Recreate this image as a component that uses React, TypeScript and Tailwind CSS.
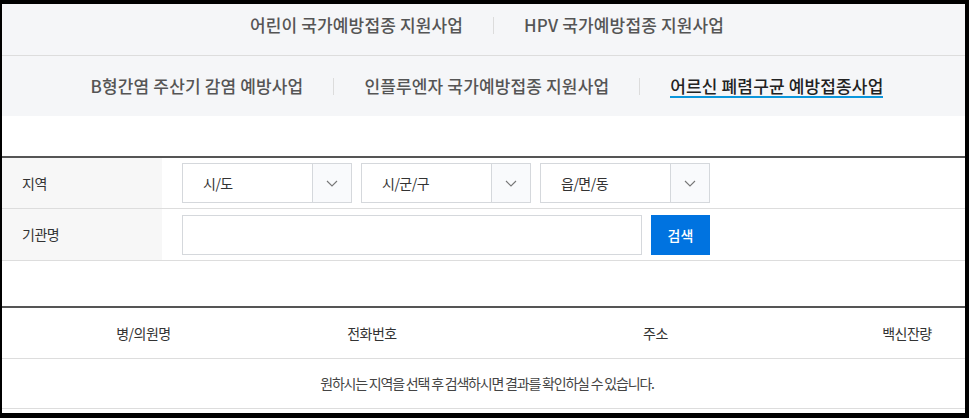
import React from "react";

const font = { fontFamily: '"Noto Sans CJK KR", "Noto Sans", sans-serif' };

function Sep() {
  return <span className="mx-[30px] h-[17px] w-px bg-[#dcdcdc]" />;
}

function Tab({ label, active = false }: { label: string; active?: boolean }) {
  if (active) {
    return (
      <span className="relative text-[17px] font-medium tracking-[0.15px] text-[#222]">
        {label}
        <span className="absolute left-0 right-0 bottom-[1px] h-[2px] bg-[#0a96dc]" />
      </span>
    );
  }
  return <span className="text-[17px] font-medium tracking-[0.15px] text-[#555]">{label}</span>;
}

function Chevron() {
  return (
    <svg width="12" height="7" viewBox="0 0 12 7" fill="none">
      <path d="M1 1l5 5 5-5" stroke="#777" strokeWidth="1.1" />
    </svg>
  );
}

function Select({ label }: { label: string }) {
  return (
    <div className="flex h-[40px] w-[170px] border border-[#d5d8dc] bg-white">
      <div className="flex flex-1 items-center pl-[20px] text-[14px] tracking-[-0.5px] text-[#333]">{label}</div>
      <div className="flex w-[39px] items-center justify-center border-l border-[#d5d8dc] bg-[#f9fafc]">
        <Chevron />
      </div>
    </div>
  );
}

export default function App() {
  return (
    <div className="h-[418px] w-[969px] bg-black pl-[2px] pt-[4px]" style={font}>
      <div className="h-[409px] w-[963px] overflow-hidden bg-white">
        {/* program tabs */}
        <div className="bg-[#f5f6f8] pl-[7px]">
          <div className="flex h-[51px] items-center justify-center pb-[9px]">
            <Tab label="어린이 국가예방접종 지원사업" />
            <Sep />
            <Tab label="HPV 국가예방접종 지원사업" />
          </div>
          <div className="-ml-[7px] h-px bg-[#dddddd]" />
          <div className="flex h-[60px] items-center justify-center">
            <Tab label="B형간염 주산기 감염 예방사업" />
            <Sep />
            <Tab label="인플루엔자 국가예방접종 지원사업" />
            <Sep />
            <Tab label="어르신 폐렴구균 예방접종사업" active />
          </div>
        </div>

        {/* search form */}
        <div className="mt-[40px] border-t-2 border-[#555]">
          <div className="flex h-[51px] border-b border-[#dddddd]">
            <div className="flex w-[160px] items-center bg-[#f7f7f7] pl-[20px] text-[14px] tracking-[-0.5px] text-[#333]">지역</div>
            <div className="flex items-center gap-[9px] pl-[20px]">
              <Select label="시/도" />
              <Select label="시/군/구" />
              <Select label="읍/면/동" />
            </div>
          </div>
          <div className="flex h-[52px] border-b border-[#dddddd]">
            <div className="flex w-[160px] items-center bg-[#f7f7f7] pl-[20px] text-[14px] tracking-[-0.5px] text-[#333]">기관명</div>
            <div className="flex items-center gap-[9px] pl-[20px] pt-[1px]">
              <input className="h-[40px] w-[460px] border border-[#d5d8dc] bg-white outline-none" />
              <button className="h-[40px] w-[59px] bg-[#0073e0] text-[14px] font-medium text-white">검색</button>
            </div>
          </div>
        </div>

        {/* result table */}
        <div className="mt-[45px] border-t-2 border-[#555]">
          <div className="flex h-[51px] items-center border-b border-[#dddddd] text-[14px] tracking-[-0.5px] text-[#333]">
            <div className="w-[280px] pl-[3px] text-center">병/의원명</div>
            <div className="w-[180px] text-center">전화번호</div>
            <div className="w-[387px] text-center">주소</div>
            <div className="flex-1 text-center">백신잔량</div>
          </div>
          <div className="flex h-[50px] items-center justify-center border-b border-[#dddddd] pl-[7px] text-[14px] tracking-[-1.2px] text-[#444]">
            원하시는 지역을 선택 후 검색하시면 결과를 확인하실 수 있습니다.
          </div>
        </div>
      </div>
    </div>
  );
}
